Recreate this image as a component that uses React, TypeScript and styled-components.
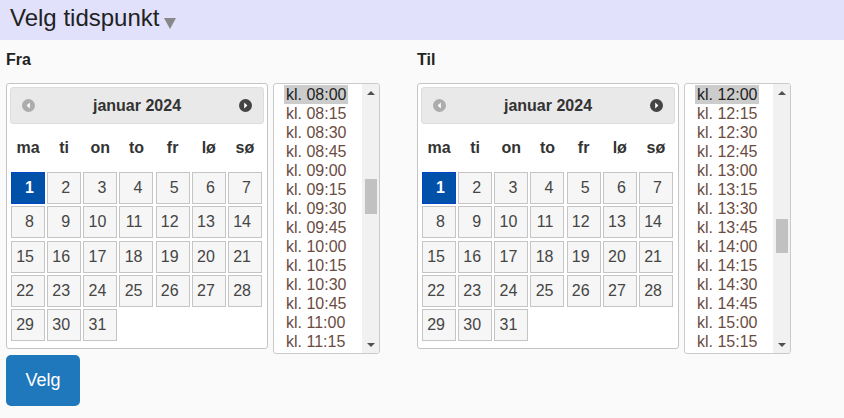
import React from "react";
import styled, { createGlobalStyle } from "styled-components";

const GlobalStyle = createGlobalStyle`
  html, body { margin: 0; padding: 0; }
  body {
    background: #fafafa;
    font-family: "Liberation Sans", Arial, sans-serif;
    color: #333;
  }
`;

const TopBar = styled.div`
  height: 40px;
  background: #e1e1fc;
  display: flex;
  align-items: flex-start;
  padding-left: 10px;
`;

const Title = styled.h1`
  margin: 0;
  font-size: 24px;
  font-weight: normal;
  line-height: 36px;
  color: #222;
`;

const Caret = styled.svg`
  margin-top: 18px;
  margin-left: 5px;
`;

const Main = styled.div`
  padding: 11px 6px 0;
`;

const Columns = styled.div`
  display: grid;
  grid-template-columns: 411px 411px;
`;

const Column = styled.div`
  display: flex;
  flex-direction: column;
`;

const Label = styled.div`
  font-size: 16px;
  font-weight: bold;
  line-height: 18px;
  color: #222;
  margin-bottom: 14px;
`;

const PickerRow = styled.div`
  display: flex;
  align-items: flex-start;
  gap: 5px;
`;

const CalendarBox = styled.div`
  box-sizing: border-box;
  width: 262px;
  background: #fff;
  border: 1px solid #c5c5c5;
  border-radius: 3px;
  padding: 3px 3px 7px;
`;

const CalHeader = styled.div`
  box-sizing: border-box;
  height: 37px;
  background: #e9e9e9;
  border: 1px solid #dddddd;
  border-radius: 3px;
  display: flex;
  align-items: center;
  justify-content: space-between;
  padding: 0 11px 0 11px;
`;

const CalTitle = styled.div`
  font-size: 16px;
  font-weight: bold;
  color: #333;
`;

const DayGrid = styled.div<{ $head?: boolean }>`
  display: grid;
  grid-template-columns: repeat(7, 34px);
  justify-content: space-between;
  margin: 0 2px 0 1px;
  grid-auto-rows: ${(p) => (p.$head ? "48px" : "32px")};
  row-gap: 2.25px;
`;

const DayName = styled.div`
  display: flex;
  align-items: center;
  justify-content: center;
  font-size: 16px;
  font-weight: bold;
  color: #333;
`;

const DayCell = styled.div<{ $active?: boolean }>`
  box-sizing: border-box;
  border: 1px solid ${(p) => (p.$active ? "#0045c8" : "#c5c5c5")};
  background: ${(p) => (p.$active ? "#0051a7" : "#f6f6f6")};
  color: ${(p) => (p.$active ? "#fff" : "#454545")};
  font-weight: ${(p) => (p.$active ? "bold" : "normal")};
  font-size: 16px;
  line-height: 30px;
  text-align: right;
  padding-right: 10px;
`;

const ListBox = styled.div`
  box-sizing: border-box;
  width: 107px;
  height: 271px;
  background: #fff;
  border: 1px solid #cacaca;
  border-radius: 3px;
  display: flex;
  overflow: hidden;
`;

const Items = styled.div`
  flex: 1;
  padding-top: 1px;
  overflow: hidden;
  display: flex;
  flex-direction: column;
`;

const Item = styled.div<{ $selected?: boolean }>`
  width: fit-content;
  margin-left: 10px;
  padding: 0 2px;
  font-size: 16px;
  line-height: 19px;
  height: 19px;
  flex-shrink: 0;
  color: ${(p) => (p.$selected ? "#222" : "#6b4c42")};
  background: ${(p) => (p.$selected ? "#cccccc" : "transparent")};
`;

const ScrollBar = styled.div`
  width: 17px;
  background: #f1f1f1;
  display: flex;
  flex-direction: column;
`;

const ArrowBtn = styled.div`
  height: 17px;
  display: flex;
  align-items: center;
  justify-content: center;
`;

const Track = styled.div`
  flex: 1;
  display: flex;
  flex-direction: column;
`;

const Thumb = styled.div`
  background: #c1c1c1;
  margin: 0 2px 0 3px;
`;

const VelgButton = styled.button`
  margin-top: 1px;
  width: 74px;
  height: 51px;
  border: none;
  border-radius: 5px;
  background: #1f77bc;
  color: #fff;
  font-family: "Liberation Sans", Arial, sans-serif;
  font-size: 18px;
  cursor: pointer;
`;

const dayNames = ["ma", "ti", "on", "to", "fr", "lø", "sø"];

const times: string[] = [];
for (let h = 0; h < 24; h++) {
  for (let m = 0; m < 60; m += 15) {
    times.push(`kl. ${String(h).padStart(2, "0")}:${String(m).padStart(2, "0")}`);
  }
}

const NavIcon: React.FC<{ dir: "prev" | "next" }> = ({ dir }) => (
  <svg width="13" height="13" viewBox="0 0 13 13">
    <circle cx="6.5" cy="6.5" r="6.5" fill={dir === "prev" ? "#acacac" : "#444"} />
    {dir === "prev" ? (
      <polygon points="7.8,3.5 7.8,9.5 4.6,6.5" fill="#fff" />
    ) : (
      <polygon points="5.2,3.5 5.2,9.5 8.4,6.5" fill="#fff" />
    )}
  </svg>
);

const Calendar: React.FC = () => {
  const days = Array.from({ length: 31 }, (_, i) => i + 1);
  return (
    <CalendarBox>
      <CalHeader>
        <NavIcon dir="prev" />
        <CalTitle>januar 2024</CalTitle>
        <NavIcon dir="next" />
      </CalHeader>
      <DayGrid $head>
        {dayNames.map((d) => (
          <DayName key={d}>{d}</DayName>
        ))}
      </DayGrid>
      <DayGrid>
        {days.map((d) => (
          <DayCell key={d} $active={d === 1}>
            {d}
          </DayCell>
        ))}
      </DayGrid>
    </CalendarBox>
  );
};

const VISIBLE = 14;
const TRACK = 235;

const TimeList: React.FC<{ selected: string }> = ({ selected }) => {
  const start = times.indexOf(selected);
  const shown = times.slice(start, start + VISIBLE);
  const thumbH = (TRACK * VISIBLE) / times.length;
  const thumbTop = (TRACK * start) / times.length;
  return (
    <ListBox>
      <Items>
        {shown.map((t) => (
          <Item key={t} $selected={t === selected}>
            {t}
          </Item>
        ))}
      </Items>
      <ScrollBar>
        <ArrowBtn>
          <svg width="8" height="4" viewBox="0 0 8 4">
            <polygon points="0,4 8,4 4,0" fill="#505050" />
          </svg>
        </ArrowBtn>
        <Track>
          <Thumb style={{ marginTop: thumbTop, height: thumbH }} />
        </Track>
        <ArrowBtn>
          <svg width="8" height="4" viewBox="0 0 8 4">
            <polygon points="0,0 8,0 4,4" fill="#505050" />
          </svg>
        </ArrowBtn>
      </ScrollBar>
    </ListBox>
  );
};

export default function App() {
  return (
    <>
      <GlobalStyle />
      <TopBar>
        <Title>Velg tidspunkt</Title>
        <Caret width="12" height="11" viewBox="0 0 12 11">
          <polygon points="0,0 12,0 6,11" fill="#888" />
        </Caret>
      </TopBar>
      <Main>
        <Columns>
          <Column>
            <Label>Fra</Label>
            <PickerRow>
              <Calendar />
              <TimeList selected="kl. 08:00" />
            </PickerRow>
          </Column>
          <Column>
            <Label>Til</Label>
            <PickerRow>
              <Calendar />
              <TimeList selected="kl. 12:00" />
            </PickerRow>
          </Column>
        </Columns>
        <VelgButton>Velg</VelgButton>
      </Main>
    </>
  );
}
